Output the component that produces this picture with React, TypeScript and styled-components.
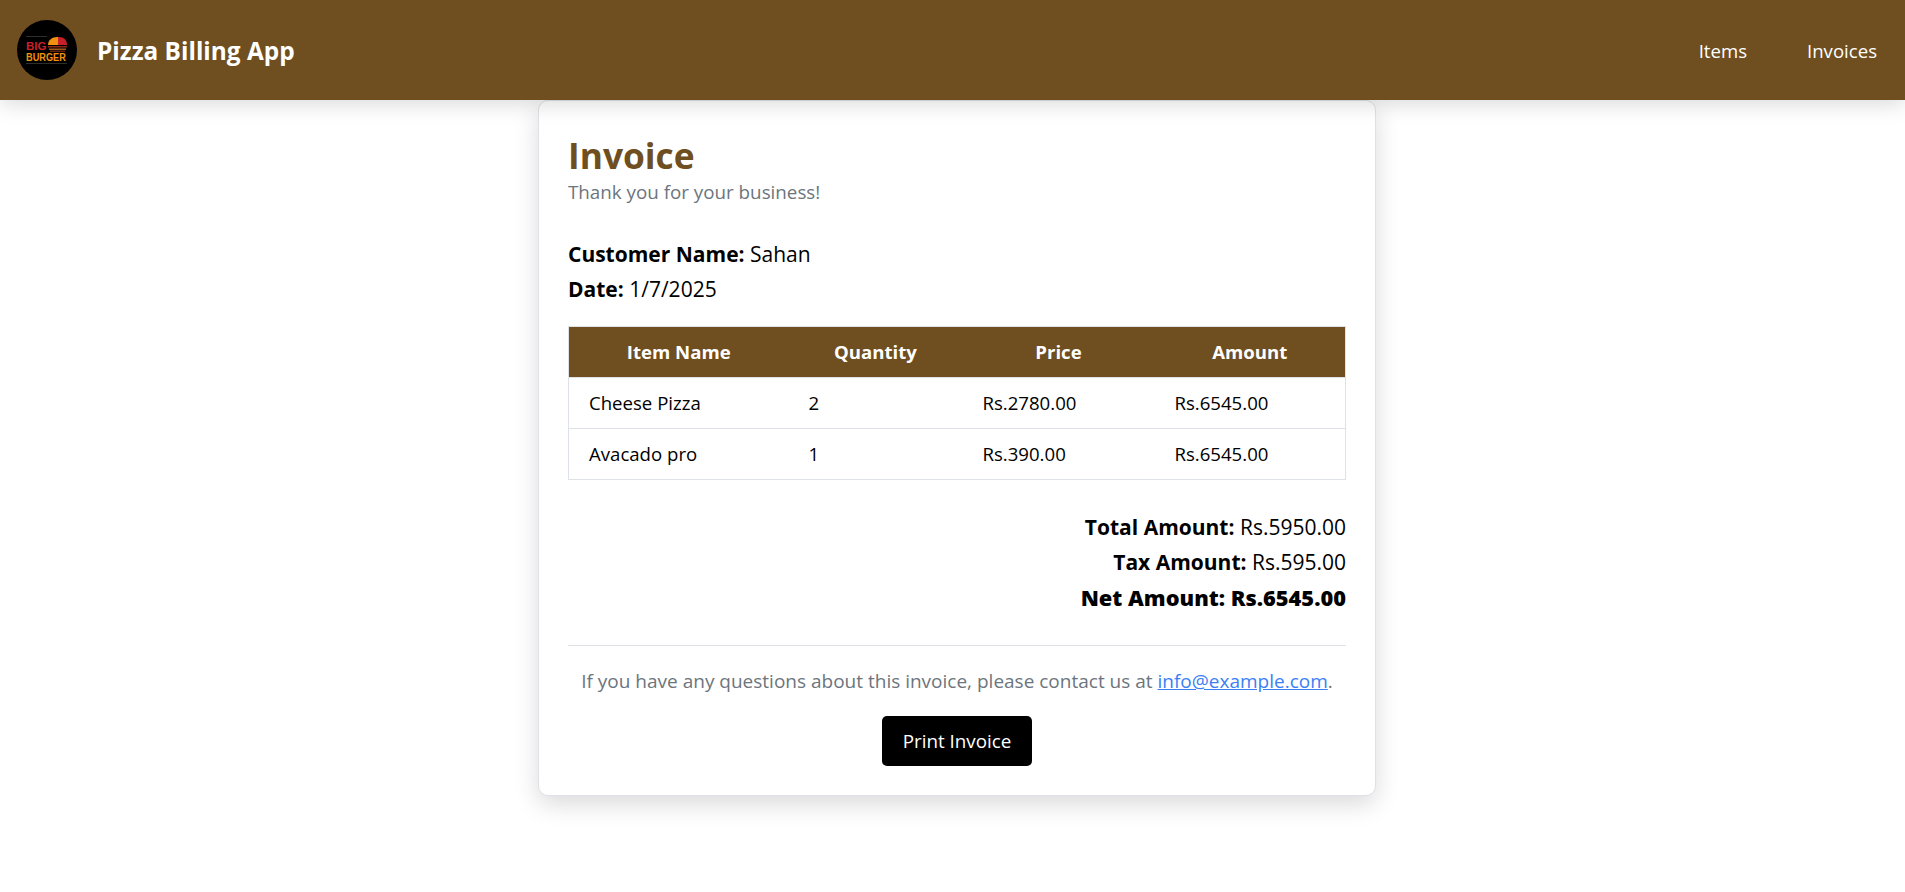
import styled, { createGlobalStyle } from "styled-components";

const GlobalStyle = createGlobalStyle`
  * {
    box-sizing: border-box;
  }

  body {
    margin: 0;
    background: #fff;
    color: #000;
    font-family: "Open Sans", "Noto Sans", sans-serif;
    font-size: 16px;
    line-height: 1.5;
  }
`;

const NavBar = styled.nav`
  position: relative;
  z-index: 2;
  display: flex;
  align-items: center;
  justify-content: space-between;
  height: 100px;
  padding: 0 28px 0 17px;
  background: #6f4e20;
  box-shadow: 0 4px 20px rgba(0, 0, 0, 0.15);
`;

const Brand = styled.div`
  display: flex;
  align-items: center;
  gap: 20px;
  color: #fff;
  font-size: 24.4px;
  font-weight: 700;
`;

const BrandName = styled.span`
  padding-top: 2px;
`;

const NavLinks = styled.div`
  display: flex;
  gap: 60px;
  padding-top: 2px;
`;

const NavLink = styled.a`
  color: #fff;
  font-size: 18.6px;
`;

const Page = styled.main`
  display: flex;
  justify-content: center;
  padding: 0 0 60px 9px;
`;

const Card = styled.section`
  width: 838px;
  padding: 30px 29px 29px;
  background: #fff;
  border: 1px solid #dee2e6;
  border-radius: 10px;
  box-shadow: 0 8px 24px rgba(0, 0, 0, 0.15);
`;

const Title = styled.h1`
  margin: 1px 0 0;
  color: #6f4e20;
  font-size: 35.3px;
  font-weight: 700;
  line-height: 47px;
`;

const Muted = styled.p`
  margin: 0 0 32px;
  color: #6c757d;
  font-size: 18.8px;
  line-height: 26px;
`;

const Info = styled.p`
  margin: 0;
  font-size: 21px;
  line-height: 35px;
`;

const InvoiceTable = styled.table`
  width: 100%;
  margin-top: 19px;
  border-collapse: collapse;
  table-layout: fixed;
  font-size: 18.6px;

  th {
    height: 51px;
    background: #6f4e20;
    color: #fff;
    font-weight: 700;
    text-align: center;
    border: 1px solid #dee2e6;
    border-width: 1px 0;
  }

  th:nth-child(1) {
    width: 220px;
  }

  th:nth-child(2) {
    width: 174px;
  }

  th:nth-child(3) {
    width: 192px;
  }

  td {
    height: 51px;
    padding: 0 20px;
    border-bottom: 1px solid #dee2e6;
  }

  tr td:first-child,
  tr th:first-child {
    border-left: 1px solid #dee2e6;
  }

  tr td:last-child,
  tr th:last-child {
    border-right: 1px solid #dee2e6;
  }
`;

const Totals = styled.div`
  margin-top: 30px;
  text-align: right;
`;

const NetAmount = styled(Info)`
  font-size: 21.8px;
  font-weight: 800;
`;

const Footer = styled.footer`
  margin-top: 30px;
  padding-top: 20px;
  border-top: 1px solid #dee2e6;
  text-align: center;
`;

const Contact = styled.p`
  margin: 0 0 20px;
  color: #6c757d;
  font-size: 19px;
  line-height: 30px;

  a {
    color: #3b7ff5;
  }
`;

const PrintButton = styled.button`
  display: block;
  height: 50px;
  margin: 0 auto;
  padding: 0 21px;
  background: #000;
  color: #fff;
  border: 0;
  border-radius: 5px;
  font-family: inherit;
  font-size: 18.8px;
`;

const LogoText = styled.text`
  font-family: "Liberation Sans", sans-serif;
  font-weight: 700;
`;

const rows = [
  { name: "Cheese Pizza", quantity: 2, price: "Rs.2780.00", amount: "Rs.6545.00" },
  { name: "Avacado pro", quantity: 1, price: "Rs.390.00", amount: "Rs.6545.00" },
];

function Logo() {
  return (
    <svg width="60" height="60" viewBox="0 0 60 60" aria-hidden="true">
      <circle cx="30" cy="30" r="30" fill="#000" />
      <path d="M9 16.500h21M9 43.500h41" stroke="#3a3a3a" strokeWidth="0.8" />
      <path d="M31 25c0-5 4-8 9-8h1v8z" fill="#f0910f" />
      <path d="M41 17h1c5 0 8 3 8 8h-9z" fill="#c8202a" />
      <path d="M31 26h19v1.500H31z" fill="#8a2a14" />
      <path d="M32 28.500h17V30H32z" fill="#a5561a" />
      <path d="M33 30.500h15V32H33z" fill="#5f2410" />
      <LogoText x="9" y="29.500" fill="#c8202a" fontSize="11.500">
        BIG
      </LogoText>
      <LogoText transform="translate(9 40.500) scale(1 1.250)" fill="#f0910f" fontSize="9.200">
        BURGER
      </LogoText>
    </svg>
  );
}

export default function App() {
  return (
    <>
      <GlobalStyle />
      <NavBar>
        <Brand>
          <Logo />
          <BrandName>Pizza Billing App</BrandName>
        </Brand>
        <NavLinks>
          <NavLink>Items</NavLink>
          <NavLink>Invoices</NavLink>
        </NavLinks>
      </NavBar>
      <Page>
        <Card>
          <Title>Invoice</Title>
          <Muted>Thank you for your business!</Muted>
          <Info>
            <strong>Customer Name:</strong> Sahan
          </Info>
          <Info>
            <strong>Date:</strong> 1/7/2025
          </Info>
          <InvoiceTable>
            <thead>
              <tr>
                <th>Item Name</th>
                <th>Quantity</th>
                <th>Price</th>
                <th>Amount</th>
              </tr>
            </thead>
            <tbody>
              {rows.map((row) => (
                <tr key={row.name}>
                  <td>{row.name}</td>
                  <td>{row.quantity}</td>
                  <td>{row.price}</td>
                  <td>{row.amount}</td>
                </tr>
              ))}
            </tbody>
          </InvoiceTable>
          <Totals>
            <Info>
              <strong>Total Amount:</strong> Rs.5950.00
            </Info>
            <Info>
              <strong>Tax Amount:</strong> Rs.595.00
            </Info>
            <NetAmount>Net Amount: Rs.6545.00</NetAmount>
          </Totals>
          <Footer>
            <Contact>
              If you have any questions about this invoice, please contact us at{" "}
              <a href="#mail">info@example.com</a>.
            </Contact>
            <PrintButton>Print Invoice</PrintButton>
          </Footer>
        </Card>
      </Page>
    </>
  );
}
